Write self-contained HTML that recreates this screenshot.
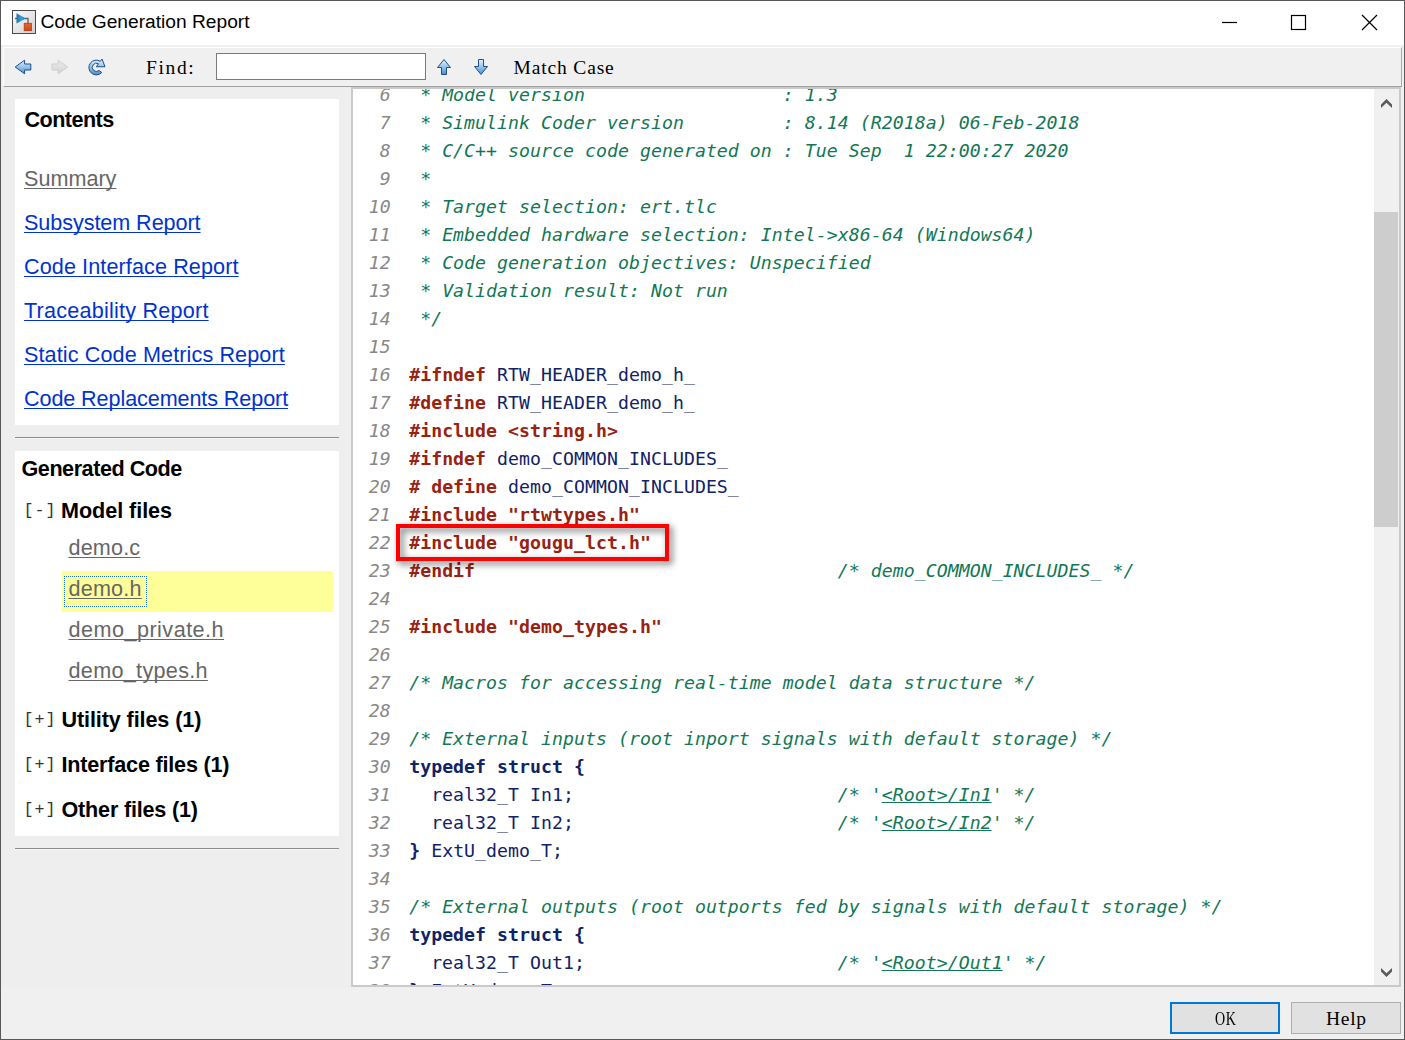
<!DOCTYPE html>
<html lang="en"><head><meta charset="utf-8"><title>Code Generation Report</title>
<style>
html,body{margin:0;padding:0}
body{width:1405px;height:1040px;overflow:hidden;position:relative;background:#fff;font-family:"Liberation Sans",sans-serif;}
.abs{position:absolute}
#win{position:absolute;left:0;top:0;width:1403px;height:1038px;border:1px solid #585858;}
#title{position:absolute;left:40.5px;top:8.8px;font-size:19.2px;line-height:26px;color:#000;white-space:nowrap}
#tbar{position:absolute;left:3px;top:47px;width:1399px;height:40px;background:#f0f0f0;box-sizing:border-box;border-top:1px solid #fff;border-left:1px solid #fff;border-bottom:1px solid #a0a0a0;border-right:1px solid #a8a8a8}

#main{position:absolute;left:1px;top:45px;width:1403px;height:994px;background:#f0f0f0}
#left{position:absolute;left:1px;top:87px;width:350px;height:900px;background:#eee}
.box{position:absolute;left:15px;width:324px;background:#fff}
.hr{position:absolute;left:15px;width:324px;height:1px;background:#8c8c8c;border-bottom:1px solid #f6f6f6}
.t{position:absolute;white-space:nowrap;font-size:21.6px;line-height:30px}
.h{font-weight:bold;color:#000}
a{text-decoration:underline;text-decoration-skip-ink:none;text-decoration-thickness:1px;text-underline-offset:2px}
a.nav{color:#0033cc}
a.vis{color:#666}
.tog{position:absolute;white-space:nowrap;font-family:"Liberation Mono",monospace;font-size:16.67px;letter-spacing:1px;line-height:30px;color:#333}
.ser{font-family:"Liberation Serif","Noto Serif CJK SC",serif;position:absolute;white-space:nowrap;font-size:19.5px;line-height:24px;color:#000}
#find{position:absolute;left:216px;top:53px;width:210px;height:27px;box-sizing:border-box;border:1px solid #7a7a7a;background:#fff}
#code{position:absolute;left:351px;top:87px;width:1050px;height:900px;box-sizing:border-box;border:2px solid #cacaca;background:#fff;overflow:hidden}
#code pre{position:absolute;margin:0;left:1.2px;top:-7.9px;font-family:"DejaVu Sans Mono",monospace;font-size:18.2px;letter-spacing:0.04px;line-height:28px;color:#112266;white-space:pre}
.ln{color:#888;font-style:italic;position:relative;left:3.5px}
.ct{color:#117755;font-style:italic}
.pp{color:#992211;font-weight:bold}
.kw{color:#112266;font-weight:bold}
a.cl{color:#117755;text-decoration:underline;text-underline-offset:1px}
#sb{position:absolute;left:1021px;top:0;width:25px;height:896px;background:#f0f0f0}
#thumb{position:absolute;left:0;top:123px;width:24px;height:315px;background:#cdcdcd}
#redbox{position:absolute;left:396px;top:524px;width:273px;height:37px;box-sizing:border-box;border:4px solid #ff0000;filter:drop-shadow(3px 3px 3.5px rgba(0,0,0,.6))}
.btn{position:absolute;top:1002px;width:110px;height:32px;box-sizing:border-box;background:#e1e1e1;border:1px solid #adadad}
#ok{left:1170px;border:2px solid #0078d7}
#help{left:1291px}

</style></head>
<body>
<div id="win"></div>
<svg class="abs" style="left:12px;top:10px" width="24" height="24" viewBox="0 0 24 24">
<defs><linearGradient id="ig" x1="0" y1="0" x2="1" y2="1"><stop offset="0" stop-color="#fdfdfd"/><stop offset="1" stop-color="#cfcfcf"/></linearGradient>
<linearGradient id="ib" x1="0" y1="0" x2="1" y2="0"><stop offset="0" stop-color="#1a6fb5"/><stop offset=".5" stop-color="#3fa0d8"/><stop offset="1" stop-color="#1f78bd"/></linearGradient>
<linearGradient id="io" x1="0" y1="0" x2="0" y2="1"><stop offset="0" stop-color="#e8682c"/><stop offset="1" stop-color="#c8441a"/></linearGradient></defs>
<rect x="0.5" y="0.5" width="23" height="23" fill="url(#ig)" stroke="#4a4a4a"/>
<path d="M3 8.5H5M13 8.5H16V14" fill="none" stroke="#666" stroke-width="1.4"/>
<path d="M4.5 3.2L14 8.5L4.5 13.6Z" fill="url(#ib)"/>
<rect x="12.2" y="13.3" width="7.2" height="7.4" fill="url(#io)" stroke="#b33a12" stroke-width=".8"/>
</svg>
<div id="title">Code Generation Report</div>
<svg class="abs" style="left:1215px;top:8px" width="170" height="30" viewBox="0 0 170 30"><g fill="none" stroke="#000" stroke-width="1.2"><path d="M7 14.5H22"/><rect x="76.5" y="7.5" width="14" height="14"/><path d="M147 7L162 22M162 7L147 22"/></g></svg>

<div id="main"></div>
<div id="tbar"></div>
<svg class="abs" style="left:13px;top:57px" width="100" height="20" viewBox="0 0 100 20">
<defs><linearGradient id="ab" x1="0" y1="0" x2="0" y2="1"><stop offset="0" stop-color="#e2f1fb"/><stop offset=".5" stop-color="#94c4e8"/><stop offset="1" stop-color="#4d8cc6"/></linearGradient>
<linearGradient id="ag" x1="0" y1="0" x2="0" y2="1"><stop offset="0" stop-color="#ececec"/><stop offset="1" stop-color="#d2d2d2"/></linearGradient></defs>
<path d="M2.2 10L11.6 3.2V7H17.8V13H11.6V16.8Z" fill="url(#ab)" stroke="#1f4e8c" stroke-width="1" stroke-linejoin="round"/>
<path d="M54.6 10L45.2 3.2V7H39V13H45.2V16.8Z" fill="url(#ag)" stroke="#cdcdcd" stroke-width="1" stroke-linejoin="round"/>
<path d="M87.3 4.3A7.4 7.4 0 1 0 88.75 15.5L86 13.5A4.1 4.1 0 1 1 85.5 6.8L83.25 9.75L92 9.75L89 2Z" fill="url(#ab)" stroke="#1f4e8c" stroke-width="1" stroke-linejoin="round"/>
</svg>
<div class="ser" style="left:146px;top:56px;letter-spacing:1.65px">Find:</div>
<div id="find"></div>
<svg class="abs" style="left:434px;top:57px" width="60" height="20" viewBox="0 0 60 20">
<path d="M10 2.5L16.5 10.5H12.5V17.5H7.5V10.5H3.5Z" fill="url(#ab)" stroke="#1f4e8c" stroke-width="1" stroke-linejoin="round"/>
<path d="M47 17.5L53.5 9.5H49.5V2.5H44.5V9.5H40.5Z" fill="url(#ab)" stroke="#1f4e8c" stroke-width="1" stroke-linejoin="round"/>
</svg>
<div class="ser" style="left:513.5px;top:56px;letter-spacing:0.85px">Match Case</div>

<div id="left"></div>
<div class="box" style="top:99px;height:326px"></div>
<div class="hr" style="top:437px"></div>
<div class="box" style="top:451px;height:385px"></div>
<div class="hr" style="top:848px"></div>

<div class="t h" style="left:24.5px;top:105px;letter-spacing:-0.55px">Contents</div>
<div class="t" style="left:24px;top:164px"><a class="vis">Summary</a></div>
<div class="t" style="left:24px;top:208px;letter-spacing:-0.07px"><a class="nav">Subsystem Report</a></div>
<div class="t" style="left:24px;top:252px;letter-spacing:0.1px"><a class="nav">Code Interface Report</a></div>
<div class="t" style="left:24px;top:296px;letter-spacing:0.22px"><a class="nav">Traceability Report</a></div>
<div class="t" style="left:24px;top:340px;letter-spacing:0.11px"><a class="nav">Static Code Metrics Report</a></div>
<div class="t" style="left:24px;top:384px;letter-spacing:-0.1px"><a class="nav">Code Replacements Report</a></div>

<div class="t h" style="left:21.5px;top:454px;letter-spacing:-0.46px">Generated Code</div>
<div class="tog" style="left:23.5px;top:496px">[-]</div>
<div class="t h" style="left:61px;top:496px;letter-spacing:-0.05px">Model files</div>
<div class="t" style="left:68.5px;top:533px;letter-spacing:0.16px"><a class="vis">demo.c</a></div>
<div class="abs" style="left:62px;top:571px;width:271px;height:41px;background:#ffff99"></div>
<div class="abs" style="left:64px;top:576px;width:83px;height:31px;box-sizing:border-box;border:1px dotted #1a73c8"></div>
<div class="t" style="left:68.5px;top:574px;letter-spacing:0.2px"><a class="vis">demo.h</a></div>
<div class="t" style="left:68.5px;top:615px;letter-spacing:0.48px"><a class="vis">demo_private.h</a></div>
<div class="t" style="left:68.5px;top:656px;letter-spacing:0.31px"><a class="vis">demo_types.h</a></div>
<div class="tog" style="left:23.5px;top:705px">[+]</div>
<div class="t h" style="left:61.5px;top:705px;letter-spacing:-0.11px">Utility files (1)</div>
<div class="tog" style="left:23.5px;top:750px">[+]</div>
<div class="t h" style="left:61.5px;top:750px;letter-spacing:-0.2px">Interface files (1)</div>
<div class="tog" style="left:23.5px;top:795px">[+]</div>
<div class="t h" style="left:61.5px;top:795px;letter-spacing:-0.2px">Other files (1)</div>

<div id="code"><pre><span class="ln">  6</span>  <span class="ct"> * Model version                  : 1.3</span>
<span class="ln">  7</span>  <span class="ct"> * Simulink Coder version         : 8.14 (R2018a) 06-Feb-2018</span>
<span class="ln">  8</span>  <span class="ct"> * C/C++ source code generated on : Tue Sep  1 22:00:27 2020</span>
<span class="ln">  9</span>  <span class="ct"> *</span>
<span class="ln"> 10</span>  <span class="ct"> * Target selection: ert.tlc</span>
<span class="ln"> 11</span>  <span class="ct"> * Embedded hardware selection: Intel-&gt;x86-64 (Windows64)</span>
<span class="ln"> 12</span>  <span class="ct"> * Code generation objectives: Unspecified</span>
<span class="ln"> 13</span>  <span class="ct"> * Validation result: Not run</span>
<span class="ln"> 14</span>  <span class="ct"> */</span>
<span class="ln"> 15</span>  
<span class="ln"> 16</span>  <span class="pp">#ifndef</span> RTW_HEADER_demo_h_
<span class="ln"> 17</span>  <span class="pp">#define</span> RTW_HEADER_demo_h_
<span class="ln"> 18</span>  <span class="pp">#include &lt;string.h&gt;</span>
<span class="ln"> 19</span>  <span class="pp">#ifndef</span> demo_COMMON_INCLUDES_
<span class="ln"> 20</span>  <span class="pp"># define</span> demo_COMMON_INCLUDES_
<span class="ln"> 21</span>  <span class="pp">#include "rtwtypes.h"</span>
<span class="ln"> 22</span>  <span class="pp">#include "gougu_lct.h"</span>
<span class="ln"> 23</span>  <span class="pp">#endif</span>                                 <span class="ct">/* demo_COMMON_INCLUDES_ */</span>
<span class="ln"> 24</span>  
<span class="ln"> 25</span>  <span class="pp">#include "demo_types.h"</span>
<span class="ln"> 26</span>  
<span class="ln"> 27</span>  <span class="ct">/* Macros for accessing real-time model data structure */</span>
<span class="ln"> 28</span>  
<span class="ln"> 29</span>  <span class="ct">/* External inputs (root inport signals with default storage) */</span>
<span class="ln"> 30</span>  <span class="kw">typedef struct {</span>
<span class="ln"> 31</span>    real32_T In1;                        <span class="ct">/* '<a class="cl">&lt;Root&gt;/In1</a>' */</span>
<span class="ln"> 32</span>    real32_T In2;                        <span class="ct">/* '<a class="cl">&lt;Root&gt;/In2</a>' */</span>
<span class="ln"> 33</span>  <span class="kw">}</span> ExtU_demo_T;
<span class="ln"> 34</span>  
<span class="ln"> 35</span>  <span class="ct">/* External outputs (root outports fed by signals with default storage) */</span>
<span class="ln"> 36</span>  <span class="kw">typedef struct {</span>
<span class="ln"> 37</span>    real32_T Out1;                       <span class="ct">/* '<a class="cl">&lt;Root&gt;/Out1</a>' */</span>
<span class="ln"> 38</span>  <span class="kw">}</span> ExtY_demo_T;</pre>
<div id="sb"><div id="thumb"></div>
<svg class="abs" style="left:6px;top:9px" width="13" height="11" viewBox="0 0 13 11"><path d="M6.5 1L12 6.5V10L6.5 4.8L1 10V6.5Z" fill="#5a5a5a"/></svg>
<svg class="abs" style="left:6px;top:878px" width="13" height="11" viewBox="0 0 13 11"><path d="M1 1V4.5L6.5 10L12 4.5V1L6.5 6.2Z" fill="#5a5a5a"/></svg>
</div></div>
<div id="redbox"></div>

<div class="btn" id="ok"></div><div class="btn" id="help"></div>
<div class="ser" style="left:1214.5px;top:1007px;letter-spacing:1px;transform:scaleX(.72);transform-origin:0 50%">OK</div>
<div class="ser" style="left:1326px;top:1007px;letter-spacing:0.7px">Help</div>

</body></html>
